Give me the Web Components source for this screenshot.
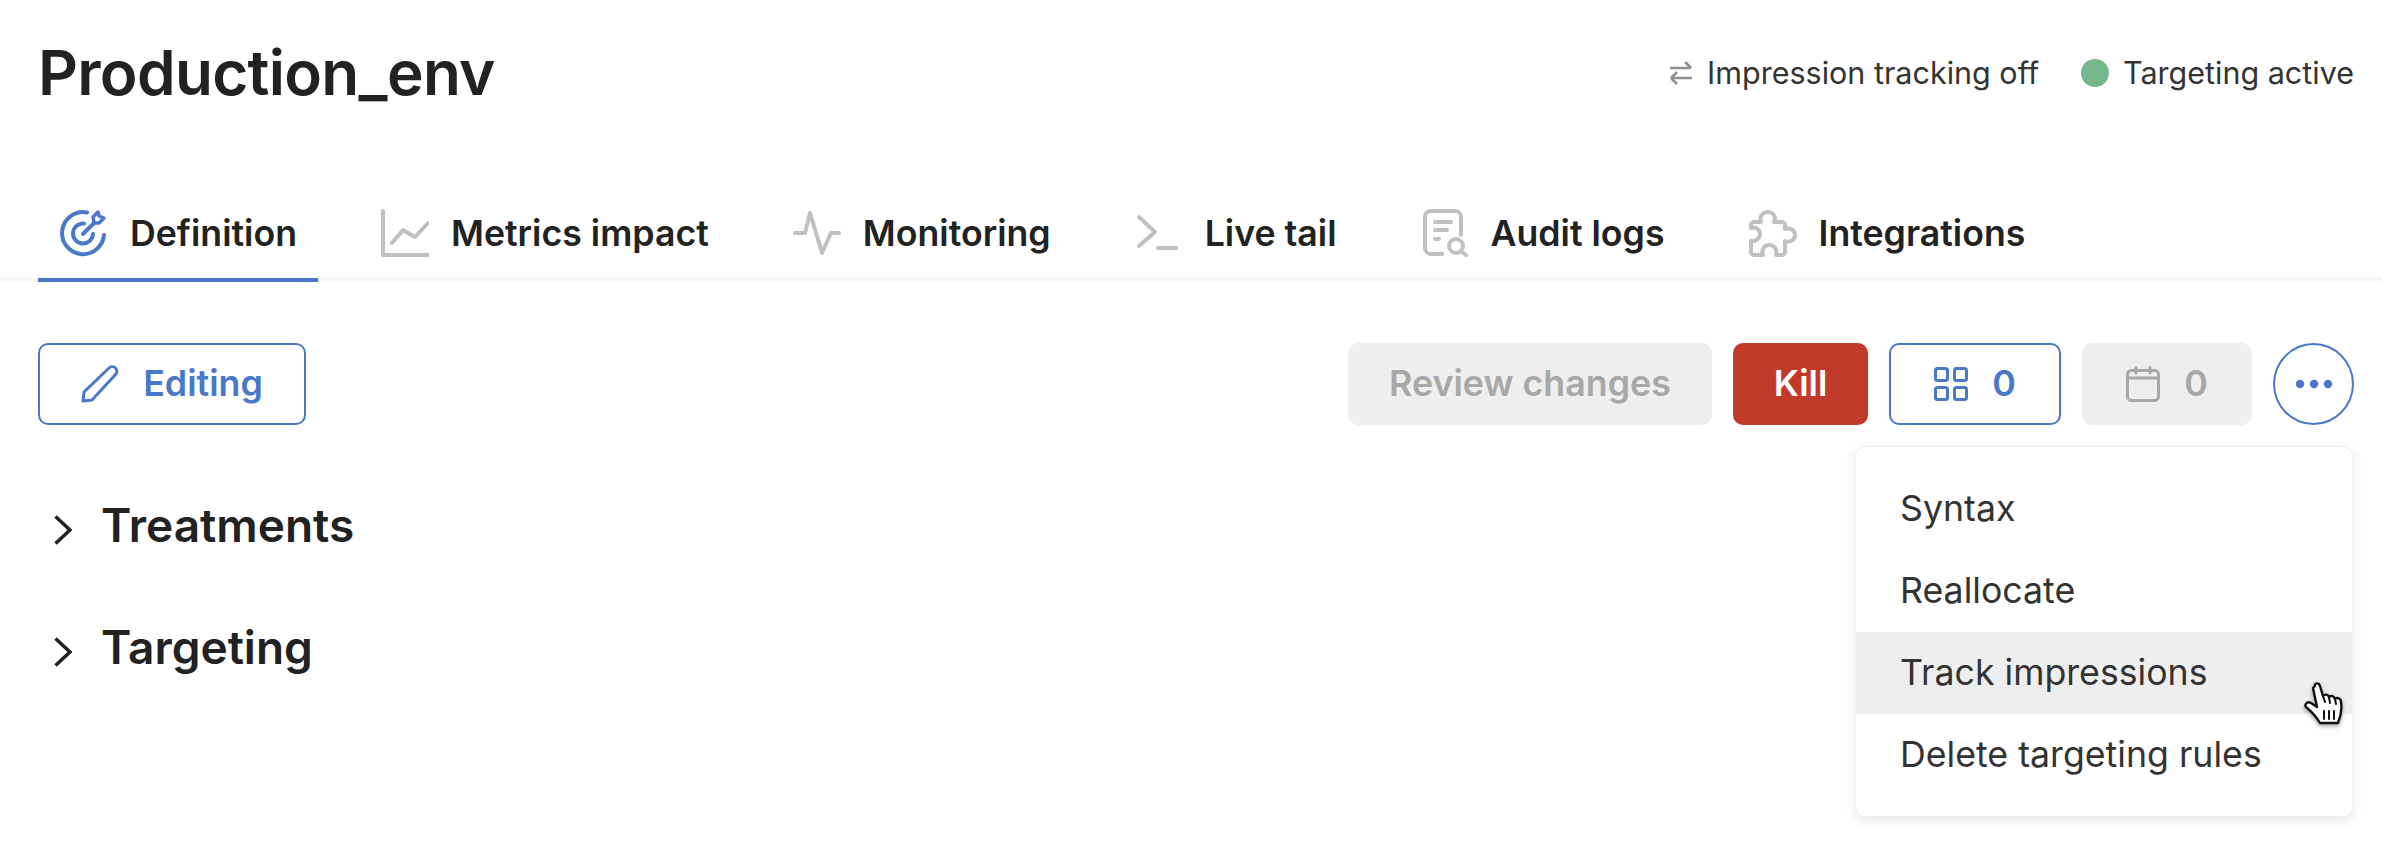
<!DOCTYPE html>
<html lang="en">
<head>
<meta charset="utf-8">
<title>Production_env</title>
<style>
  html, body { margin: 0; background: #fff; }
  body { font-family: Inter, "Liberation Sans", sans-serif; color: #222; }
</style>
</head>
<body>
<split-page>
  <page-header slot="header" title="Production_env">
    <status-item>
      <svg slot="icon" width="24" height="26" viewBox="0 0 24 26" fill="none" stroke="#8f8f8f" stroke-width="2.6"><path d="M1 8H22M16 2L22 8M23 18H2M8 12L2 18M8 24L2 18"/></svg>
      Impression tracking off
    </status-item>
    <status-item>
      <span slot="icon" class="dot" style="display:block;width:28px;height:28px;border-radius:50%;background:#76b68e"></span>
      Targeting active
    </status-item>
  </page-header>

  <tab-bar slot="tabs">
    <tab-item active label="Definition">
      <svg viewBox="0 0 48 48" fill="none" stroke="#4a78c9" stroke-width="4" stroke-linecap="round" stroke-linejoin="round">
        <path d="M27 3.5A21 21 0 1 0 44 26"/>
        <path d="M24 14.5A10 10 0 1 0 33 25"/>
        <path d="M23 25L34 14"/>
        <path d="M34 14L33 8L38 3L39 7L44 9L39 14Z" stroke-width="3.4"/>
      </svg>
    </tab-item>
    <tab-item label="Metrics impact">
      <svg viewBox="0 0 48 48" fill="none" stroke="#c0c0c0" stroke-width="4" stroke-linecap="round" stroke-linejoin="round">
        <path d="M2 2V46H48"/><path d="M11 34L22 21L34 28L47 14"/>
      </svg>
    </tab-item>
    <tab-item label="Monitoring">
      <svg viewBox="0 0 48 48" fill="none" stroke="#c0c0c0" stroke-width="4" stroke-linecap="round" stroke-linejoin="round">
        <path d="M2 24H12L17 4L29 44L38 24H46"/>
      </svg>
    </tab-item>
    <tab-item label="Live tail">
      <svg viewBox="0 0 48 48" fill="none" stroke="#c0c0c0" stroke-width="4" stroke-linecap="round" stroke-linejoin="round">
        <path d="M4 8L20 23L4 37"/><path d="M23 39H41"/>
      </svg>
    </tab-item>
    <tab-item label="Audit logs">
      <svg viewBox="0 0 48 48" fill="none" stroke="#c0c0c0" stroke-width="4" stroke-linecap="round" stroke-linejoin="round">
        <path d="M22 45H11a6 6 0 0 1-6-6V8a6 6 0 0 1 6-6H35a6 6 0 0 1 6 6V26"/>
        <path d="M15 13H31M15 21H27M15 30H19"/>
        <circle cx="36" cy="37" r="7"/><path d="M41 42L46 46"/>
      </svg>
    </tab-item>
    <tab-item label="Integrations">
      <svg viewBox="0 0 48 48" fill="none" stroke="#c0c0c0" stroke-width="4" stroke-linecap="round" stroke-linejoin="round">
        <path d="M12 13C10 6 15 3 19 3C23 3 28 7 25 13H33a3 3 0 0 1 3 3V20C42 18 46 22 46 26C46 31 41 34 36 32V43a3 3 0 0 1-3 3H27C29 40 25 36 20 36C15 36 12 41 14 46H5a3 3 0 0 1-3-3V32C7 33 11 29 11 25C11 21 7 17 2 19V16a3 3 0 0 1 3-3Z"/>
      </svg>
    </tab-item>
  </tab-bar>

  <action-bar slot="actions">
    <action-button slot="left" variant="outline" width="268">
      <svg slot="icon" width="38" height="38" viewBox="0 0 38 38" fill="none" stroke="currentColor" stroke-width="3" stroke-linejoin="round"><path d="M2 36L3 27L28 3a4.5 4.5 0 0 1 6.5 6.5L11 35Z"/></svg>
      Editing
    </action-button>
    <action-button variant="disabled" width="364">Review changes</action-button>
    <action-button variant="danger" width="135">Kill</action-button>
    <action-button variant="outline" width="172">
      <svg slot="icon" width="34" height="34" viewBox="0 0 34 34" fill="none" stroke="currentColor" stroke-width="3"><rect x="1.5" y="1.5" width="12" height="12" rx="2"/><rect x="20.5" y="1.5" width="12" height="12" rx="2"/><rect x="1.5" y="20.5" width="12" height="12" rx="2"/><rect x="20.5" y="20.5" width="12" height="12" rx="2"/></svg>
      0
    </action-button>
    <action-button variant="disabled" width="170">
      <svg slot="icon" width="34" height="36" viewBox="0 0 34 36" fill="none" stroke="currentColor" stroke-width="3" stroke-linecap="round"><rect x="1.5" y="4.5" width="31" height="30" rx="4"/><path d="M1.5 12H32.5M10 1.5V7M24 1.5V7"/></svg>
      0
    </action-button>
    <action-button variant="round" width="81">
      <svg width="38" height="10" viewBox="0 0 38 10" fill="currentColor"><circle cx="5" cy="5" r="4.2"/><circle cx="19" cy="5" r="4.2"/><circle cx="33" cy="5" r="4.2"/></svg>
    </action-button>
  </action-bar>

  <collapse-row slot="content">Treatments</collapse-row>
  <collapse-row slot="content">Targeting</collapse-row>

  <popup-menu slot="overlay">
    <menu-entry>Syntax</menu-entry>
    <menu-entry>Reallocate</menu-entry>
    <menu-entry hover>Track impressions</menu-entry>
    <menu-entry>Delete targeting rules</menu-entry>
  </popup-menu>
  <hand-cursor slot="overlay"></hand-cursor>
</split-page>

<script>
// page frame, everything else sits in its slots
class SplitPage extends HTMLElement {
  constructor() {
    super();
    this.attachShadow({ mode: 'open' });
    this.shadowRoot.innerHTML = `
      <style>
        :host { display: block; position: relative; width: 2382px; height: 845px; overflow: hidden; background: #fff; }
        .actions { display: block; padding: 61px 28px 39px 38px; }
        .content { display: block; padding: 0 38px; }
      </style>
      <slot name="header"></slot>
      <slot name="tabs"></slot>
      <div class="actions"><slot name="actions"></slot></div>
      <div class="content"><slot name="content"></slot></div>
      <slot name="overlay"></slot>
    `;
  }
}

class PageHeader extends HTMLElement {
  constructor() {
    super();
    this.attachShadow({ mode: 'open' });
  }

  connectedCallback() {
    this.shadowRoot.innerHTML = `
      <style>
        :host { display: flex; align-items: center; justify-content: space-between; height: 146px; padding: 0 28px 0 38px; }
        h1 { margin: 0; font: 600 62px/1 Inter, sans-serif; letter-spacing: -0.7px; color: #222; }
        .status { display: flex; align-items: center; gap: 42px; }
      </style>
      <h1>${this.getAttribute('title')}</h1>
      <div class="status"><slot></slot></div>
    `;
  }
}

class StatusItem extends HTMLElement {
  constructor() {
    super();
    this.attachShadow({ mode: 'open' });
    this.shadowRoot.innerHTML = `
      <style>
        :host { display: flex; align-items: center; gap: 14px; font: 400 30.5px/1 Inter, sans-serif; color: #333; }
        ::slotted(svg), ::slotted(span) { flex: none; }
      </style>
      <slot name="icon"></slot><span><slot></slot></span>
    `;
  }
}

class TabBar extends HTMLElement {
  constructor() {
    super();
    this.attachShadow({ mode: 'open' });
    this.shadowRoot.innerHTML = `
      <style>
        :host { display: flex; gap: 41px; height: 136px; box-sizing: border-box; padding: 38px 0 0 38px; background: linear-gradient(#f7f7f7, #f7f7f7) left bottom / 100% 5px no-repeat; }
      </style>
      <slot></slot>
    `;
  }
}

class TabItem extends HTMLElement {
  constructor() {
    super();
    this.attachShadow({ mode: 'open' });
  }

  connectedCallback() {
    this.shadowRoot.innerHTML = `
      <style>
        :host { display: flex; align-items: center; gap: 22px; box-sizing: border-box; height: 98px; padding: 0 21px 0 22px; font: 600 35.7px/1 Inter, sans-serif; color: #222; }
        :host([active]) { box-shadow: inset 0 -4px 0 #4a78c9; }
        ::slotted(svg) { width: 48px; height: 48px; flex: none; }
        span { padding-top: 2px; }
      </style>
      <slot></slot><span>${this.getAttribute('label')}</span>
    `;
  }
}

class ActionBar extends HTMLElement {
  constructor() {
    super();
    this.attachShadow({ mode: 'open' });
    this.shadowRoot.innerHTML = `
      <style>
        :host { display: flex; justify-content: space-between; }
        .right { display: flex; gap: 21px; }
      </style>
      <slot name="left"></slot>
      <div class="right"><slot></slot></div>
    `;
  }
}

class ActionButton extends HTMLElement {
  constructor() {
    super();
    this.attachShadow({ mode: 'open' });
  }

  connectedCallback() {
    this.shadowRoot.innerHTML = `
      <style>
        :host { display: inline-flex; align-items: center; justify-content: center; gap: 24px; box-sizing: border-box; width: ${this.getAttribute('width')}px; height: 82px; border-radius: 10px; font: 600 35.8px/1 Inter, sans-serif; }
        :host([variant="outline"]) { border: 2.5px solid #4a78c9; color: #4a78c9; background: #fff; }
        :host([variant="disabled"]) { background: #eee; color: #a8a8a8; }
        :host([variant="danger"]) { background: #c23b2a; color: #fff; }
        :host([variant="round"]) { border: 2.5px solid #4a78c9; border-radius: 50%; color: #4a78c9; background: #fff; }
        ::slotted(svg) { flex: none; }
      </style>
      <slot name="icon"></slot><slot></slot>
    `;
  }
}

class CollapseRow extends HTMLElement {
  constructor() {
    super();
    this.attachShadow({ mode: 'open' });
    this.shadowRoot.innerHTML = `
      <style>
        :host { display: flex; align-items: center; gap: 29px; height: 122px; padding-left: 16px; font: 600 46px/1 Inter, sans-serif; color: #222; }
        svg { flex: none; margin-top: 10px; }
      </style>
      <svg width="18" height="30" viewBox="0 0 18 30" fill="none" stroke="#222" stroke-width="3.6"><path d="M1.5 1.5L16 15L1.5 28.5"/></svg>
      <span><slot></slot></span>
    `;
  }
}

class PopupMenu extends HTMLElement {
  constructor() {
    super();
    this.attachShadow({ mode: 'open' });
    this.shadowRoot.innerHTML = `
      <style>
        :host { display: block; position: absolute; left: 1855px; top: 446px; width: 498px; box-sizing: border-box; padding: 21px 0 20px; background: #fff; border: 1px solid #efefef; border-radius: 10px; box-shadow: 0 4px 12px rgba(0,0,0,.09); }
      </style>
      <slot></slot>
    `;
  }
}

class MenuEntry extends HTMLElement {
  constructor() {
    super();
    this.attachShadow({ mode: 'open' });
    this.shadowRoot.innerHTML = `
      <style>
        :host { display: flex; align-items: center; height: 82px; padding-left: 44px; font: 400 35.7px/1 Inter, sans-serif; color: #333; }
        :host([hover]) { background: #eee; }
      </style>
      <slot></slot>
    `;
  }
}

// the mouse pointer from the screen capture
class HandCursor extends HTMLElement {
  constructor() {
    super();
    this.attachShadow({ mode: 'open' });
    this.shadowRoot.innerHTML = `
      <style>
        :host { display: block; position: absolute; left: 2303px; top: 682px; width: 42px; height: 44px; filter: drop-shadow(0 2px 2px rgba(0,0,0,.35)); }
      </style>
      <svg width="42" height="44" viewBox="0 0 42 44" stroke="#111" stroke-width="2.4" stroke-linejoin="round" stroke-linecap="round" fill="#fff">
        <path d="M12 4C11 1 16 0 17 4L20 14C22 12 25 12 26 15C28 13 31 14 32 17C34 15 38 16 38 20C39 27 38 34 35 41H17C14 36 9 30 3 25C1 22 5 19 8 21L14 25L10 6Z"/>
        <path d="M20 14L22 20M26 15L27 21M32 17L33 22" fill="none" stroke-width="2"/>
        <path d="M21 29V37M26 29V37M31 29V37" fill="none" stroke-width="2"/>
      </svg>
    `;
  }
}

customElements.define('split-page', SplitPage);
customElements.define('page-header', PageHeader);
customElements.define('status-item', StatusItem);
customElements.define('tab-bar', TabBar);
customElements.define('tab-item', TabItem);
customElements.define('action-bar', ActionBar);
customElements.define('action-button', ActionButton);
customElements.define('collapse-row', CollapseRow);
customElements.define('popup-menu', PopupMenu);
customElements.define('menu-entry', MenuEntry);
customElements.define('hand-cursor', HandCursor);
</script>
</body>
</html>
